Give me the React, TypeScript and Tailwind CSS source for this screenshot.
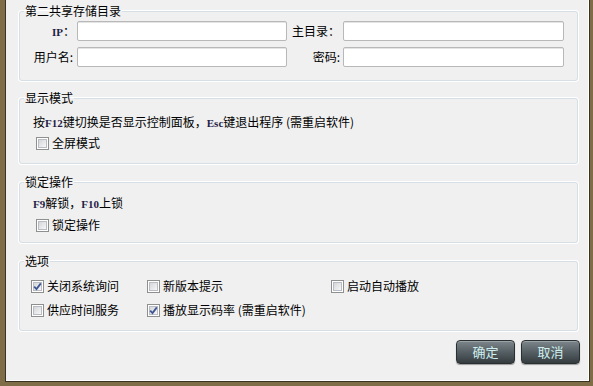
import React from 'react';

const cjk = "font-['Noto_Sans_CJK_SC','Noto_Sans',sans-serif]";

function Latin({ children }: { children: React.ReactNode }) {
  return <span className="font-['Liberation_Serif',serif] font-bold text-[11px] text-[#1f1d48]">{children}</span>;
}

function Checkbox({ checked, label }: { checked?: boolean; label: React.ReactNode }) {
  return (
    <div className="flex items-center gap-[3px] h-[16px]">
      <span className="w-[13px] h-[13px] shrink-0 border border-[#8e8f8f] bg-white p-[1px] flex">
        <span className="relative flex-1 border border-[#b9bcc2] bg-gradient-to-br from-[#d4d6d9] to-[#f7f7f7]">
          {checked && (
            <svg className="absolute -left-[1px] -top-[1px]" width="9" height="9" viewBox="0 0 9 9">
              <path d="M1.2 4.6 L3.5 7 L7.8 1.4" fill="none" stroke="#3f5694" strokeWidth="1.8" />
            </svg>
          )}
        </span>
      </span>
      <span className="text-black">{label}</span>
    </div>
  );
}

function Group({ title, className, children }: { title: string; className?: string; children: React.ReactNode }) {
  return (
    <fieldset className={`border border-[#d5dfe5] rounded-[3px] shadow-[0_0_0_1px_#fff] ml-[13px] mr-[11px] ${className ?? ''}`}>
      <legend className="ml-[4px] px-[1px] leading-[14px] text-black">{title}</legend>
      {children}
    </fieldset>
  );
}

function Field({ className }: { className?: string }) {
  return <div className={`h-[20px] bg-white border border-[#b8b8b8] rounded-[2px] shadow-[inset_0_1px_0_#e4e4e4] ${className ?? ''}`} />;
}

export default function App() {
  return (
    <div className={`w-[593px] h-[386px] bg-[#7e6d47] pl-[5px] pr-[3px] pb-[4px] text-[12px] leading-[16px] ${cjk}`}>
      <div className="h-full bg-[#f0f0f0] border-l border-r border-b border-[#3a3222] shadow-[inset_-1px_-1px_0_#fff] pt-[4px] flex flex-col">
        <Group title="第二共享存储目录" className="pt-[3px] pb-[13px]">
          <div className="grid grid-cols-[55px_2px_210px_56px_221px] gap-y-[6px] items-center">
            <span className="text-right"><Latin>IP</Latin>：</span>
            <span />
            <Field />
            <span className="text-right pr-[3px]">主目录：</span>
            <Field />
            <span className="text-right pr-[2px]">用户名:</span>
            <span />
            <Field />
            <span className="text-right pr-[3px]">密码:</span>
            <Field />
          </div>
        </Group>

        <Group title="显示模式" className="mt-[10px] pt-[9px] pb-[12px]">
          <div className="pl-[13px]">
            按<Latin>F12</Latin>键切换是否显示控制面板，<Latin>Esc</Latin>键退出程序 (需重启软件)
          </div>
          <div className="pl-[16px] mt-[4px]">
            <Checkbox label="全屏模式" />
          </div>
        </Group>

        <Group title="锁定操作" className="mt-[11px] pt-[6px] pb-[9px]">
          <div className="pl-[13px]">
            <Latin>F9</Latin>解锁，<Latin>F10</Latin>上锁
          </div>
          <div className="pl-[16px] mt-[5px]">
            <Checkbox label="锁定操作" />
          </div>
        </Group>

        <Group title="选项" className="mt-[11px] pt-[10px] pb-[12px]">
          <div className="grid grid-cols-[116px_184px_1fr] gap-y-[8px] pl-[11px]">
            <Checkbox checked label="关闭系统询问" />
            <Checkbox label="新版本提示" />
            <Checkbox label="启动自动播放" />
            <Checkbox label="供应时间服务" />
            <Checkbox checked label="播放显示码率 (需重启软件)" />
          </div>
        </Group>

        <div className="flex justify-end gap-[6px] mt-[9px] mr-[9px]">
          {['确定', '取消'].map((t) => (
            <button
              key={t}
              className="w-[59px] h-[24px] rounded-[4px] border border-[#2a2f32] bg-gradient-to-b from-[#7d878b] via-[#566064] to-[#353c40] shadow-[inset_0_1px_0_#9aa3a6,0_1px_1px_#9a9a9a] text-[#cfeeee] text-[13px] leading-[22px]"
            >
              {t}
            </button>
          ))}
        </div>
      </div>
    </div>
  );
}
